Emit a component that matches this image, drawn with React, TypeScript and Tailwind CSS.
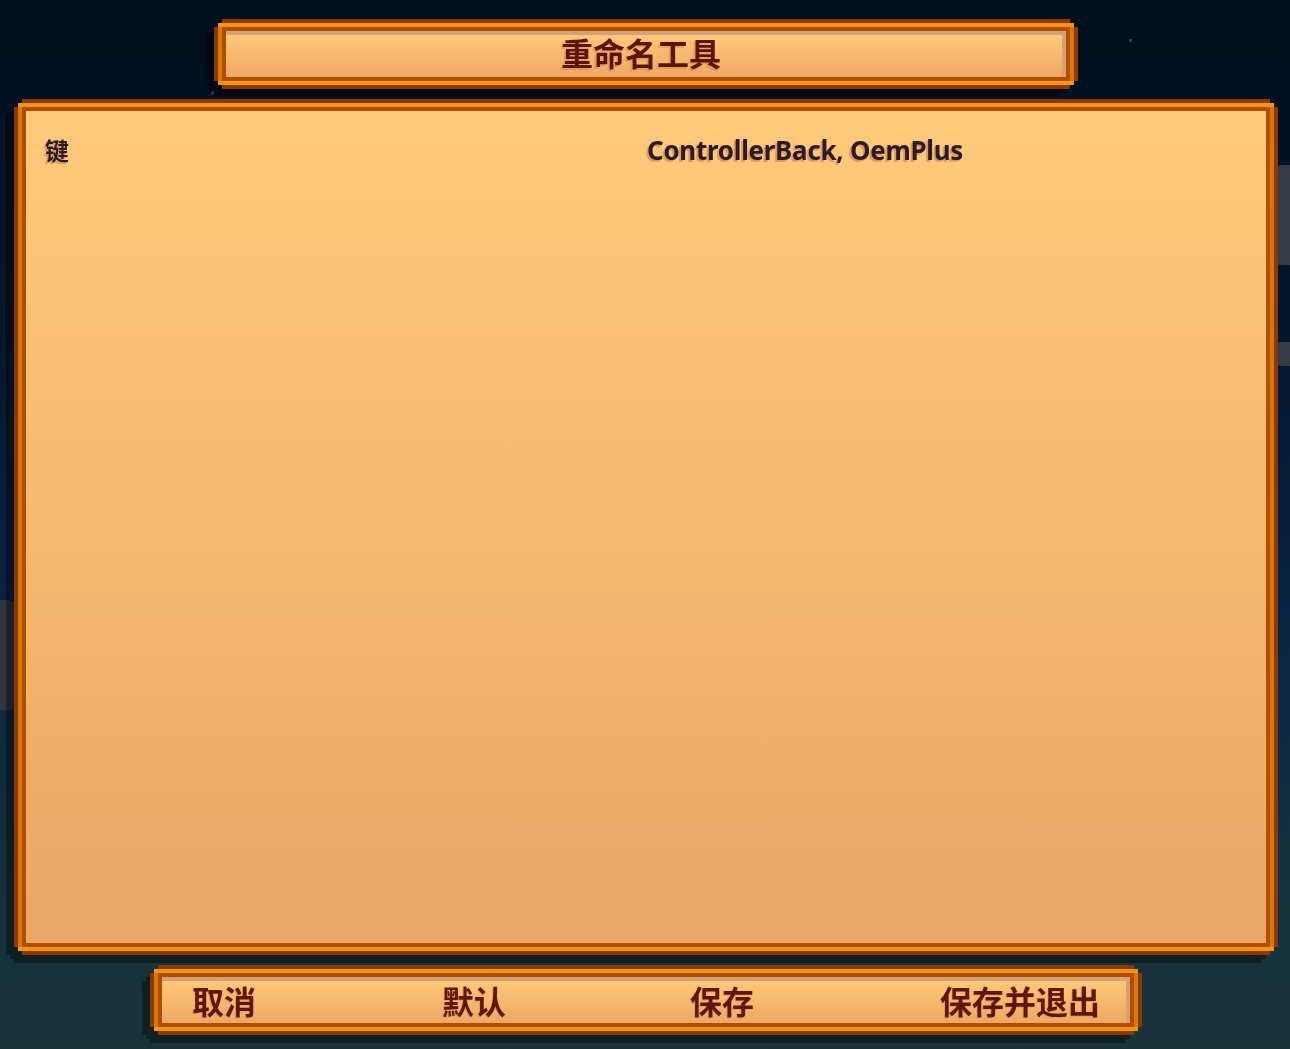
import type { ReactNode } from "react";

const stepClip =
  "[clip-path:polygon(8px_0,calc(100%_-_8px)_0,calc(100%_-_8px)_4px,calc(100%_-_4px)_4px,calc(100%_-_4px)_8px,100%_8px,100%_calc(100%_-_8px),calc(100%_-_4px)_calc(100%_-_8px),calc(100%_-_4px)_calc(100%_-_4px),calc(100%_-_8px)_calc(100%_-_4px),calc(100%_-_8px)_100%,8px_100%,8px_calc(100%_-_4px),4px_calc(100%_-_4px),4px_calc(100%_-_8px),0_calc(100%_-_8px),0_8px,4px_8px,4px_4px,8px_4px)]";

const cjk = "font-['Noto_Sans_CJK_SC','Noto_Sans',sans-serif]";

const buttons = ["取消", "默认", "保存", "保存并退出"];

function PixelFrame({ className, children }: { className: string; children: ReactNode }) {
  // dark rim > orange band > brown band > content
  return (
    <div className={`drop-shadow-[-8px_8px_0_rgba(0,0,0,0.38)] ${className}`}>
      <div className={`h-full w-full bg-[#8a3a08] p-[4px] ${stepClip}`}>
        <div className="h-full w-full border-y-4 border-[#f89400] bg-[#d87800] px-[4px]">
          <div className="h-full w-full bg-[#b04e00] p-[4px]">{children}</div>
        </div>
      </div>
    </div>
  );
}

export default function App() {
  return (
    <div className="relative flex h-[1049px] w-full flex-col items-center overflow-hidden bg-[linear-gradient(to_bottom,#000f1d_0%,#02152a_30%,#0a2342_58%,#14303e_82%,#1a3538_100%)] pl-[2px]">
      {/* stars and clouds on the sky behind the panels */}
      <span className="absolute left-[1129px] top-[39px] h-[3px] w-[3px] bg-[#3c424a]" />
      <span className="absolute left-[211px] top-[91px] h-[3px] w-[3px] bg-[#3c424a]" />
      <span className="absolute left-[1268px] top-[165px] h-[100px] w-[30px] rounded-l-[14px] bg-[#363b44]" />
      <span className="absolute left-[1272px] top-[342px] h-[24px] w-[20px] rounded-l-[10px] bg-[#363b44]" />
      <span className="absolute left-[-20px] top-[600px] h-[110px] w-[40px] rounded-r-[14px] bg-[#30353e]" />

      <PixelFrame className="mt-[19px] h-[70px] w-[864px]">
        <div className="flex h-full w-full items-center justify-center border-r-4 border-t-4 border-[#d6a07a] bg-[linear-gradient(to_bottom,#ffc878,#eea865)] pb-[8px] pr-[6px]">
          <h1 className={`${cjk} text-[32px] font-bold leading-none text-[#5a1509] [text-shadow:-2px_2px_0_rgba(214,130,70,0.45)]`}>
            重命名工具
          </h1>
        </div>
      </PixelFrame>

      <PixelFrame className="mt-[10px] h-[856px] w-[1264px]">
        <div className="h-full w-full bg-[linear-gradient(to_bottom,#ffca7b,#eaa766)] pl-[19px] pt-[23px]">
          <div className="grid grid-cols-[602px_auto] items-center text-[#2b1a28] [text-shadow:-2px_2px_0_#dc9a5e]">
            <span className={`${cjk} text-[24px] font-bold leading-[32px]`}>键</span>
            <span className="font-['Noto_Sans',sans-serif] text-[26px] font-bold leading-[32px] tracking-[-0.3px]">
              ControllerBack, OemPlus
            </span>
          </div>
        </div>
      </PixelFrame>

      <PixelFrame className="mt-[10px] h-[70px] w-[992px]">
        <div className="grid h-full w-full grid-cols-[250px_248px_250px_auto] items-center border-r-4 border-t-4 border-[#d6a07a] bg-[linear-gradient(to_bottom,#ffc878,#eea865)] pb-[5px] pl-[30px]">
          {buttons.map((label) => (
            <span
              className={`${cjk} text-[32px] font-semibold leading-none text-[#5e180b] [text-shadow:-1px_1px_0_rgba(214,130,70,0.4)]`}
              key={label}
            >
              {label}
            </span>
          ))}
        </div>
      </PixelFrame>
    </div>
  );
}
